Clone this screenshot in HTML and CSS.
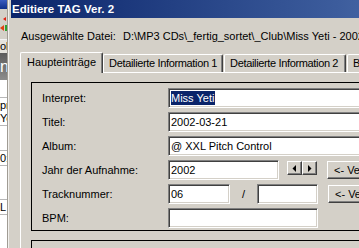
FILE: index.html
```html
<!DOCTYPE html>
<html lang="de">
<head>
    <meta charset="UTF-8">
    <title>Editiere TAG Ver. 2</title>
    <link rel="stylesheet" href="styles.css">
</head>
<body>
<div class="screen">
    <div class="bg-window">
        <div class="bg-icon"></div>
        <div class="bg-tools">
            <svg width="7" height="30" viewBox="0 0 7 30">
                <path d="M3 10 L6 8 L6 12 Z" fill="#e02010"/>
                <path d="M0 19 L4 16 L4 22 Z" fill="#e04010"/>
                <rect x="5" y="16" width="2" height="6" fill="#30a030"/>
            </svg>
        </div>
        <div class="bg-cell">ol</div>
        <div class="bg-banner">ne</div>
        <div class="bg-list">
            <div class="bg-gap gap-a"></div>
            <div class="bg-row bg-double">pre<br>Ye</div>
            <div class="bg-gap gap-b"></div>
            <div class="bg-row">0:</div>
            <div class="bg-gap gap-c"></div>
            <div class="bg-row">L F</div>
            <div class="bg-gap"></div>
        </div>
    </div>

    <div class="dialog">
        <div class="titlebar">Editiere TAG Ver. 2</div>
        <div class="dialog-body">
            <div class="file-row">
                <span class="file-label">Ausgewählte Datei:</span>
                <span class="file-path">D:\MP3 CDs\_fertig_sortet\_Club\Miss Yeti - 2002-03-21 - @ XXL Pitch Control.mp3</span>
            </div>

            <div class="tabs">
                <div class="tab active">Haupteinträge</div>
                <div class="tab info">Detailierte Information 1</div>
                <div class="tab info info-2">Detailierte Information 2</div>
                <div class="tab">Bilder</div>
            </div>

            <div class="tab-panel">
                <div class="group">
                    <div class="field">
                        <label>Interpret:</label>
                        <div class="input wide"><span class="selected">Miss Yeti</span></div>
                    </div>
                    <div class="field">
                        <label>Titel:</label>
                        <div class="input wide">2002-03-21</div>
                    </div>
                    <div class="field">
                        <label>Album:</label>
                        <div class="input wide">@ XXL Pitch Control</div>
                    </div>
                    <div class="field">
                        <label>Jahr der Aufnahme:</label>
                        <div class="input year">2002</div>
                        <div class="spinner">
                            <div class="spin-btn">
                                <svg width="5" height="7" viewBox="0 0 5 7"><path d="M4 0 L4 7 L0.5 3.5 Z" fill="#000"/></svg>
                            </div>
                            <div class="spin-btn">
                                <svg width="5" height="7" viewBox="0 0 5 7"><path d="M1 0 L1 7 L4.5 3.5 Z" fill="#000"/></svg>
                            </div>
                        </div>
                        <div class="button">&lt;- Verwenden</div>
                    </div>
                    <div class="field">
                        <label>Tracknummer:</label>
                        <div class="input track">06</div>
                        <span class="slash">/</span>
                        <div class="input track-total"></div>
                        <div class="button">&lt;- Verwenden</div>
                    </div>
                    <div class="field">
                        <label>BPM:</label>
                        <div class="input bpm"></div>
                    </div>
                </div>
                <div class="group group-next"></div>
            </div>
        </div>
    </div>
</div>
</body>
</html>
```

FILE: styles.css
```css
body {
    margin: 0;
    padding: 0;
    background-color: #d4d0c8;
    font-family: "Liberation Sans", Arial, sans-serif;
    font-size: 11px;
    color: #000;
}

.screen {
    display: flex;
    width: 359px;
    height: 248px;
    overflow: hidden;
}

/* window in the background, only a sliver is visible */
.bg-window {
    width: 7px;
    flex-shrink: 0;
    border-right: 1px solid #a09c94;
    display: flex;
    flex-direction: column;
    overflow: hidden;
    background: #fff;
}

.bg-icon {
    height: 9px;
    background: linear-gradient(180deg, #3a5cc0, #10308a);
}

.bg-tools {
    height: 30px;
    background: #d4d0c8;
}

.bg-tools svg {
    display: block;
}

.bg-cell {
    height: 13px;
    line-height: 13px;
    border-top: 1px solid #f4f4f4;
    background: #e4e2dc;
    white-space: nowrap;
}

.bg-banner {
    height: 27px;
    line-height: 27px;
    font-size: 16px;
    color: #fff;
    background: linear-gradient(180deg, #5c5c5c, #8c8c8c);
    white-space: nowrap;
}

.bg-list {
    flex: 1;
    display: flex;
    flex-direction: column;
}

.bg-gap {
    flex-shrink: 0;
    flex-grow: 1;
}

.gap-a {
    flex: 0 0 17px;
}

.gap-b {
    flex: 0 0 24px;
}

.gap-c {
    flex: 0 0 33px;
}

.bg-row {
    border-top: 1px solid #b8b8b8;
    border-bottom: 1px solid #b8b8b8;
    line-height: 14px;
    white-space: nowrap;
}

.bg-double {
    padding-top: 1px;
    line-height: 13px;
}

/* the dialog */
.dialog {
    flex-shrink: 0;
    width: 540px;
    border-left: 1px solid #f2f1ee;
    padding-left: 2px;
    display: flex;
    flex-direction: column;
}

.titlebar {
    height: 18px;
    line-height: 18px;
    padding-left: 1px;
    color: #fff;
    font-weight: bold;
    font-size: 11.5px;
    background: linear-gradient(90deg, #0a246a 0%, #3c5c9c 60%, #6c8cc4 100%);
    white-space: nowrap;
}

.dialog-body {
    padding-left: 9px;
}

.file-row {
    display: flex;
    height: 34px;
    align-items: center;
    padding-left: 1px;
    padding-top: 1px;
    box-sizing: border-box;
    white-space: nowrap;
}

.file-label {
    width: 102px;
    flex-shrink: 0;
}

.tabs {
    display: flex;
    align-items: flex-end;
    height: 20px;
    position: relative;
    z-index: 1;
}

.tab {
    height: 18px;
    line-height: 16px;
    padding: 0 5px;
    border-top: 1px solid #fff;
    border-left: 1px solid #fff;
    border-right: 1px solid #404040;
    box-shadow: inset -1px 0 #808080;
    border-radius: 2px 2px 0 0;
    white-space: nowrap;
    box-sizing: border-box;
    flex-shrink: 0;
}

.tab.info {
    width: 120px;
    letter-spacing: -0.35px;
}

.tab.info-2 {
    width: 122px;
}

.tab.active {
    height: 21px;
    line-height: 19px;
    margin-bottom: -1px;
    padding: 0 6px 2px 6px;
    background: #d4d0c8;
}

.tab + .tab {
    margin-left: 1px;
}

.tab.active + .tab {
    margin-left: 0;
}

.tab-panel {
    border-top: 1px solid #fff;
    border-left: 1px solid #fff;
    padding: 9px 0 0 10px;
}

.group {
    border: 1px solid #000;
    border-right: none;
    padding: 5px 0 2px 10px;
    display: flex;
    flex-direction: column;
    gap: 4px;
}

.group-next {
    margin-top: 9px;
    height: 20px;
}

.field {
    display: flex;
    align-items: center;
    height: 20px;
}

.field label {
    width: 126px;
    flex-shrink: 0;
}

.input {
    height: 20px;
    box-sizing: border-box;
    background: #fff;
    border: 1px solid;
    border-color: #808080 #fff #fff #808080;
    box-shadow: inset 1px 1px #404040, inset -1px -1px #d4d0c8;
    padding: 2px 2px 0 2px;
    line-height: 14px;
    white-space: nowrap;
    overflow: hidden;
}

.input.wide {
    width: 240px;
}

.input.year {
    width: 111px;
}

.input.track {
    width: 62px;
}

.input.track-total {
    width: 61px;
}

.input.bpm {
    width: 150px;
}

.selected {
    background: #0a246a;
    color: #fff;
    display: inline-block;
    height: 14px;
    padding-right: 1px;
}

.slash {
    width: 27px;
    text-align: center;
    flex-shrink: 0;
}

.spinner {
    display: flex;
    margin-left: 8px;
    align-self: flex-start;
    margin-top: 1px;
}

.spin-btn {
    width: 15px;
    height: 14px;
    box-sizing: border-box;
    border: 1px solid;
    border-color: #fff #404040 #404040 #fff;
    box-shadow: inset -1px -1px #808080;
    display: flex;
    align-items: center;
    justify-content: center;
}

.button {
    height: 18px;
    line-height: 16px;
    box-sizing: border-box;
    padding: 0 6px;
    margin-left: 10px;
    border: 1px solid;
    border-color: #fff #404040 #404040 #fff;
    box-shadow: inset -1px -1px #808080;
    white-space: nowrap;
    flex-shrink: 0;
}
```
